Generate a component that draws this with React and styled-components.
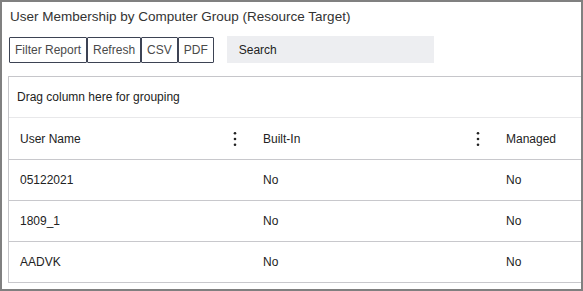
import React from 'react'
import styled, {createGlobalStyle} from 'styled-components'

const GlobalStyle = createGlobalStyle`
  html, body {
    margin: 0;
    padding: 0;
    background: #fff;
  }
  body {
    font-family: "Liberation Sans", Arial, sans-serif;
    color: #333;
  }
`

const Frame = styled.div`
  box-sizing: border-box;
  width: 583px;
  height: 291px;
  border: 2px solid #808080;
  background: #fff;
  overflow: hidden;
  display: flex;
  flex-direction: column;
`

const Title = styled.h1`
  margin: 5px 0 0 0;
  padding-left: 8px;
  font-size: 13.5px;
  line-height: 20px;
  font-weight: normal;
  color: #333;
`

const Toolbar = styled.div`
  display: flex;
  align-items: center;
  margin-top: 9px;
  padding-left: 7px;
  height: 27px;
`

const ButtonGroup = styled.div`
  display: flex;
`

const ToolButton = styled.button`
  box-sizing: border-box;
  height: 26px;
  margin: 0;
  padding: 0 5px;
  border: 1px solid #3d4354;
  border-radius: 1px;
  background: #fff;
  font-family: inherit;
  font-size: 12px;
  color: #4a4a4a;
  cursor: pointer;
`

const Search = styled.div`
  box-sizing: border-box;
  width: 207px;
  height: 27px;
  margin-left: 13px;
  padding-left: 12px;
  display: flex;
  align-items: center;
  background: #edeef1;
  font-size: 12px;
  color: #222;
`

const Grid = styled.div`
  flex: none;
  width: 620px;
  margin: 13px 0 0 6px;
  border-top: 1px solid #c6c6ca;
  border-left: 1px solid #c6c6ca;
`

const GroupArea = styled.div`
  height: 40px;
  display: flex;
  align-items: center;
  padding-left: 8px;
  font-size: 12px;
  color: #222;
  border-bottom: 1px solid #e8e8ea;
`

const Row = styled.div`
  display: grid;
  grid-template-columns: 243px 243px 1fr;
  height: ${p => (p.$header ? 41 : 40)}px;
  border-bottom: 1px solid #c8c8cc;
`

const Cell = styled.div`
  display: flex;
  align-items: center;
  justify-content: space-between;
  padding: 0 15px 0 11px;
  font-size: 12px;
  color: #222;
`

const Kebab = () => (
  <svg width="4" height="16" viewBox="0 0 4 16" aria-hidden="true">
    <circle cx="2" cy="2.2" r="1.3" fill="#222" />
    <circle cx="2" cy="8" r="1.3" fill="#222" />
    <circle cx="2" cy="13.8" r="1.3" fill="#222" />
  </svg>
)

const columns = ['User Name', 'Built-In', 'Managed']

const rows = [
  ['05122021', 'No', 'No'],
  ['1809_1', 'No', 'No'],
  ['AADVK', 'No', 'No'],
]

const App = () => {
  return (
    <>
      <GlobalStyle />
      <Frame>
        <Title>User Membership by Computer Group (Resource Target)</Title>
        <Toolbar>
          <ButtonGroup>
            <ToolButton>Filter Report</ToolButton>
            <ToolButton>Refresh</ToolButton>
            <ToolButton>CSV</ToolButton>
            <ToolButton>PDF</ToolButton>
          </ButtonGroup>
          <Search>Search</Search>
        </Toolbar>
        <Grid>
          <GroupArea>Drag column here for grouping</GroupArea>
          <Row $header>
            {columns.map((c, i) => (
              <Cell key={c}>
                <span>{c}</span>
                {i < columns.length - 1 && <Kebab />}
              </Cell>
            ))}
          </Row>
          {rows.map(r => (
            <Row key={r[0]}>
              {r.map((v, i) => (
                <Cell key={i}>{v}</Cell>
              ))}
            </Row>
          ))}
        </Grid>
      </Frame>
    </>
  )
}

export default App
